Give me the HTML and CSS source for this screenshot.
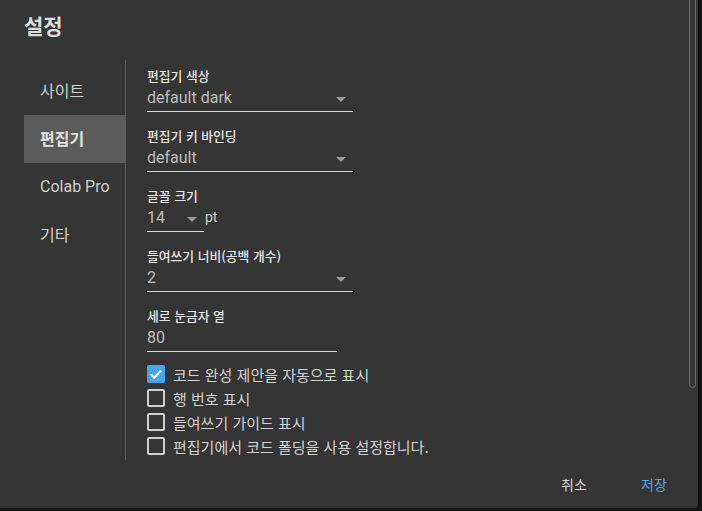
FILE: index.html
```html
<!DOCTYPE html>
<html lang="ko">
<head>
<meta charset="utf-8">
<title>설정</title>
<link rel="stylesheet" href="styles.css">
</head>
<body>
<div class="page">
  <div class="dialog">
    <h1 class="title">설정</h1>
    <div class="body">
      <nav class="nav">
        <div class="nav-item">사이트</div>
        <div class="nav-item selected">편집기</div>
        <div class="nav-item">Colab Pro</div>
        <div class="nav-item">기타</div>
      </nav>
      <div class="content">
        <div class="field">
          <div class="label">편집기 색상</div>
          <div class="select w-wide"><span class="value">default dark</span><span class="arrow"></span></div>
        </div>
        <div class="field">
          <div class="label">편집기 키 바인딩</div>
          <div class="select w-wide"><span class="value">default</span><span class="arrow"></span></div>
        </div>
        <div class="field">
          <div class="label">글꼴 크기</div>
          <div class="inline">
            <div class="select w-small"><span class="value">14</span><span class="arrow"></span></div>
            <span class="unit">pt</span>
          </div>
        </div>
        <div class="field">
          <div class="label">들여쓰기 너비(공백 개수)</div>
          <div class="select w-wide"><span class="value">2</span><span class="arrow"></span></div>
        </div>
        <div class="field">
          <div class="label">세로 눈금자 열</div>
          <div class="select w-input"><span class="value">80</span></div>
        </div>
        <div class="checks">
          <label class="check"><span class="box checked"><svg viewBox="0 0 18 18" width="18" height="18"><path d="M3.8 9.2l3.4 3.4 7-7.2" fill="none" stroke="#fff" stroke-width="2.2"/></svg></span>코드 완성 제안을 자동으로 표시</label>
          <label class="check"><span class="box"></span>행 번호 표시</label>
          <label class="check"><span class="box"></span>들여쓰기 가이드 표시</label>
          <label class="check"><span class="box"></span>편집기에서 코드 폴딩을 사용 설정합니다.</label>
        </div>
      </div>
    </div>
    <div class="actions">
      <div class="btn">취소</div>
      <div class="btn primary">저장</div>
    </div>
    <div class="scrollbar"></div>
  </div>
  <div class="outside"></div>
</div>
</body>
</html>
```
FILE: styles.css
```css
html, body {
  margin: 0;
  padding: 0;
  background: #161616;
  width: 702px;
  height: 511px;
  overflow: hidden;
  font-family: Roboto, "Noto Sans CJK KR", sans-serif;
}
.page {
  display: flex;
  height: 511px;
}
.dialog {
  position: relative;
  width: 698px;
  height: 508px;
  background: #353535;
  border-bottom-right-radius: 4px;
  display: flex;
  flex-direction: column;
}
.title {
  margin: 0;
  padding: 12px 0 0 24px;
  height: 44px;
  box-sizing: border-box;
  font-size: 21px;
  line-height: 26px;
  font-weight: 700;
  color: #dcdcdc;
  font-family: "Noto Sans CJK KR", sans-serif;
}
.body {
  display: flex;
  margin-top: 16px;
  height: 400px;
}
.nav {
  width: 102px;
  margin-left: 24px;
  border-right: 1px solid #5c5c5c;
  padding-top: 7px;
  box-sizing: border-box;
}
.nav-item {
  height: 48px;
  display: flex;
  align-items: center;
  padding-left: 16px;
  padding-bottom: 2px;
  box-sizing: border-box;
  font-size: 16px;
  color: #cfcfcf;
  font-family: Roboto, "Noto Sans CJK KR", sans-serif;
}
.nav-item.selected {
  background: #5b5b5b;
  font-weight: 700;
  color: #e0e0e0;
}
.content {
  padding-left: 21px;
  padding-top: 8px;
}
.field {
  margin-bottom: 16px;
}
.label {
  font-size: 12.8px;
  line-height: 16px;
  height: 16px;
  font-weight: 500;
  color: #e6e6e6;
  font-family: "Noto Sans CJK KR", sans-serif;
}
.select {
  position: relative;
  height: 28px;
  box-sizing: border-box;
  border-bottom: 1px solid #d8d8d8;
  padding-top: 4px;
}
.value {
  font-size: 16px;
  line-height: 20px;
  color: #bdbdbd;
}
.arrow {
  position: absolute;
  right: 7px;
  top: 13px;
  width: 0;
  height: 0;
  border-left: 5px solid transparent;
  border-right: 5px solid transparent;
  border-top: 5px solid #9a9a9a;
}
.w-wide { width: 206px; }
.w-small { width: 57px; }
.w-input { width: 190px; }
.inline {
  display: flex;
  align-items: flex-start;
}
.unit {
  font-size: 14px;
  line-height: 20px;
  padding-top: 3px;
  padding-left: 1px;
  color: #cfcfcf;
}
.checks {
  margin-top: -6px;
}
.check {
  display: flex;
  align-items: center;
  height: 24px;
  font-size: 15px;
  color: #d2d2d2;
  font-family: "Noto Sans CJK KR", sans-serif;
}
.box {
  width: 18px;
  height: 18px;
  box-sizing: border-box;
  border: 2px solid #d0d0d0;
  border-radius: 2px;
  margin-right: 8px;
  display: flex;
  align-items: center;
  justify-content: center;
}
.box.checked {
  background: #42a5f5;
  border: none;
}
.actions {
  display: flex;
  justify-content: flex-end;
  gap: 16px;
  padding-right: 12px;
  margin-top: 6px;
}
.btn {
  min-width: 64px;
  height: 36px;
  display: flex;
  align-items: center;
  justify-content: center;
  font-size: 14px;
  color: #d6d6d6;
  font-family: "Noto Sans CJK KR", sans-serif;
}
.btn.primary {
  color: #4ea6ee;
}
.scrollbar {
  position: absolute;
  right: 2px;
  top: -4px;
  width: 7px;
  height: 392px;
  box-sizing: border-box;
  border: 1px solid #6a6a6a;
  border-radius: 4px;
}
.outside {
  flex: 1;
  background: #121212;
}
```
